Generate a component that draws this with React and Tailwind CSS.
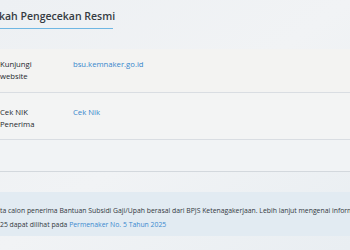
export default function App() {
  const font = { fontFamily: '"Open Sans", "Noto Sans", sans-serif' };
  return (
    <div
      className="relative w-[350px] h-[250px] overflow-hidden bg-gradient-to-br from-[#edf0f3] via-[#f1f3f5] to-[#e9eef2]"
      style={font}
    >
      <div className="pt-[9px]">
        <div className="w-[113px] border-b border-[#6fb7e3] pb-[5px]">
          <div className="text-[10.5px] leading-[14px] font-semibold text-[#353b42] whitespace-nowrap -ml-[1px]">
            kah Pengecekan Resmi
          </div>
        </div>
      </div>
      <div className="mt-[20px] flex flex-col text-[7.7px] leading-[11.5px] font-medium text-[#24282d]">
        <div className="h-[44px] flex pt-[10px] bg-[#f3f3f2] border-b border-[#d9dde2]">
          <div className="w-[73px]">
            Kunjungi
            <br />
            website
          </div>
          <div className="text-[#3686cc]">bsu.kemnaker.go.id</div>
        </div>
        <div className="h-[47px] flex pt-[14px] bg-[#f3f4f4] border-b border-[#d9dde2]">
          <div className="w-[73px]">
            Cek NIK
            <br />
            Penerima
          </div>
          <div className="text-[#3686cc]">Cek Nik</div>
        </div>
        <div className="h-[32px] bg-[#f1f3f5] border-b border-[#d3d8dd]"></div>
      </div>
      <div className="mt-[20px] h-[44px] bg-[#e2ebf2] pt-[12px] text-[6.85px] leading-[14px] text-[#33383e] whitespace-nowrap overflow-hidden">
        <div>
          ta calon penerima Bantuan Subsidi Gaji/Upah berasal dari BPJS Ketenagakerjaan. Lebih lanjut mengenai informasi
        </div>
        <div>
          25 dapat dilihat pada <span className="text-[#3b8ad0]">Permenaker No. 5 Tahun 2025</span>
        </div>
      </div>
    </div>
  );
}
